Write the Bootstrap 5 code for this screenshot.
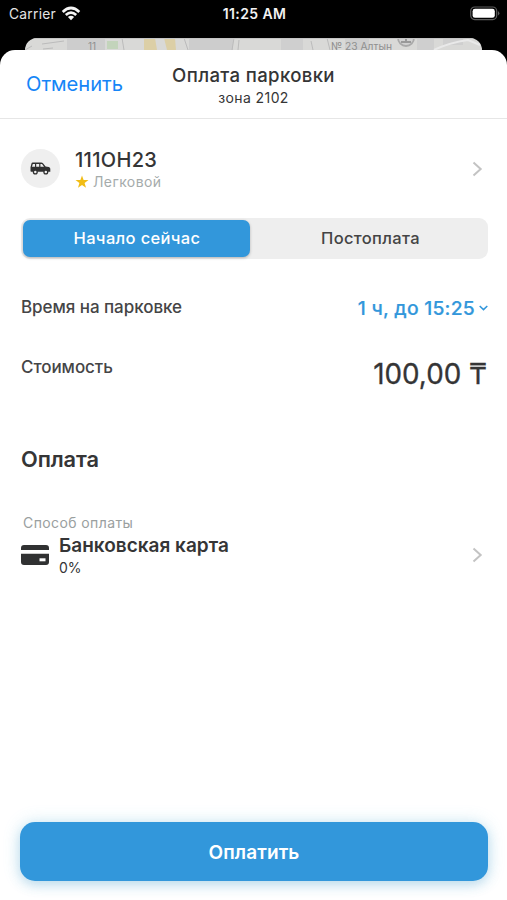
<!DOCTYPE html>
<html lang="ru">
<head>
<meta charset="utf-8">
<meta name="viewport" content="width=device-width, initial-scale=1">
<title>Оплата парковки</title>
<link href="https://cdn.jsdelivr.net/npm/bootstrap@5.3.0/dist/css/bootstrap.min.css" rel="stylesheet">
<style>
body{font-family:Inter,"Liberation Sans",sans-serif;color:#353536;height:900px;overflow:hidden;background:#000}
svg{display:block;flex:none}
.status-bar{height:38px;font-size:13.8px;letter-spacing:.25px;color:#e4e4e4;padding:5px 7px 0 9px}
.status-bar>div{height:18px}
.status-bar .wifi{margin-left:5px;margin-top:-1px}
.status-bar .clock{height:17px;font-size:14px;font-weight:600;letter-spacing:.4px;color:#f2f2f2}
.map-strip{height:12px;margin:0 25px;border-radius:12px 12px 0 0;overflow:hidden}
.map-strip text{font-size:10px;line-height:10px}
.sheet{height:850px;border-radius:15px 15px 0 0}
.sheet-head{height:69px;border-bottom:1px solid #e6e6e6}
.side{width:148px;padding-left:26px}
.cancel{font-size:20.2px;color:#1585f7;letter-spacing:-.05px}
.title{font-size:18.6px;line-height:24px;font-weight:500;letter-spacing:.35px;padding-top:1px}
.zone{font-size:14px;line-height:18px;letter-spacing:.4px;padding-top:2px}
.inset{padding-left:21px;padding-right:19px}
.car-row{height:99px}
.avatar{width:39px;height:39px;background:#efefef;margin-right:15px}
.car-text{padding-top:2px}
.plate{font-size:20px;line-height:24px;font-weight:500;letter-spacing:.3px}
.kind{font-size:14px;line-height:20px;letter-spacing:.4px;color:#a5abab}
.seg{height:41px;background:#eee;border-radius:9px;padding:2px}
.seg .btn{font-size:16.5px;font-weight:500;border:0;padding:0;border-radius:7px;letter-spacing:.35px;color:#444}
.seg .on{flex:0 0 227px;background:#3297db;color:#fff;box-shadow:0 1px 3px rgba(0,0,0,.25);padding-left:1px}
.seg .off{padding-left:5px}
.time-row{height:60px;margin-top:19px}
.lbl{font-size:17px;font-weight:500;letter-spacing:-.05px;color:#454546}
.time{font-size:19.3px;font-weight:500;color:#3297db;gap:4px;letter-spacing:.25px;-webkit-text-stroke:.2px}
.sum-row{height:60px}
.sum{font-size:27.8px;line-height:34px;font-weight:400;padding:19px 1px 0 0;-webkit-text-stroke:.3px}
.pay-title{font-size:21.8px;line-height:30px;font-weight:600;letter-spacing:-.1px;margin-top:46px}
.method-label{font-size:14px;line-height:20px;letter-spacing:.4px;color:#9aa0a0;margin-top:39px;padding-left:2px}
.method{height:44px}
.method-text{padding-top:2px}
.bank{font-size:19px;line-height:24px;font-weight:600}
.fee{font-size:14px;line-height:20px}
.pay{height:59px;margin:0 19px 19px 20px;padding:3px 0 0;border-radius:15px;background:#3297db;font-size:19px;font-weight:600;letter-spacing:.1px;box-shadow:0 4px 12px rgba(50,140,195,.25),0 0 18px rgba(70,180,215,.2)}
</style>
<script src="https://cdn.jsdelivr.net/npm/bootstrap@5.3.0/dist/js/bootstrap.bundle.min.js"></script>
</head>
<body>
<header class="status-bar d-flex">
  <div class="col d-flex align-items-center"><span>Carrier</span>
    <svg class="wifi" width="20" height="15" viewBox="0 0 20 15" fill="none" stroke="#f4f4f4" stroke-width="2.7"><path d="M1.7 5.9Q10-1.9 18.3 5.9M4.8 9Q10 4.2 15.2 9"/><path d="M10 14.3L6.9 11Q10 8.3 13.1 11Z" fill="#f4f4f4" stroke="none"/></svg>
  </div>
  <div class="clock d-flex align-items-center">11:25 AM</div>
  <div class="col d-flex justify-content-end align-items-center">
    <svg width="30" height="16" viewBox="0 0 30 16"><rect x=".7" y="1" width="26" height="12.6" rx="4" fill="none" stroke="#5c5c5c" stroke-width="1.2"/><rect x="2.6" y="2.8" width="22.2" height="9" rx="2.4" fill="#fff"/><path d="M28 5Q30.8 7.3 28 9.6Z" fill="#5c5c5c"/></svg>
  </div>
</header>
<div class="map-strip">
  <svg width="457" height="12" viewBox="0 0 457 12"><path fill="#d9d9d7" d="M0 0h457v12H0z"/><path fill="#cdcdcd" d="M42 0h38v12H42zM164 0h44v12h-44z"/><path fill="#cfcfcf" d="M256 0h22v12h-22zM320 1h24v11h-24zM392 0h17v12h-17zM418 0h20v7h-20z"/><path fill="#dccfa6" d="M119 0h11l2 12h-13zM139 0h11l1 12h-9z"/><path fill="#c3d4bb" d="M82 3h11v8H82z"/><path d="M0 12L7 8M17 6L39 3M18 11L28 10M97 0L99 12M159 0L163 12M209 0L207 12M214 2L213 12M286 3L288 12M302 0L305 12" fill="none" stroke="#bbb"/><path d="M409 12Q423 5 443 2L455 7" fill="none" stroke="#e9e9e9" stroke-width="2"/><circle cx="381" cy="0" r="8" fill="#d1d1d1" stroke="#a9a9a9" stroke-width="1.8"/><path d="M376 4h10M381 0v4" stroke="#999" stroke-width="2"/><path d="M0 .5H457" stroke="#c4c4c4"/><g fill="#8f8f8f" font-family="Inter,sans-serif"><text x="63" y="11.5">11</text><text x="306" y="11.5" textLength="61" lengthAdjust="spacingAndGlyphs">№ 23 Алтын</text></g></svg>
</div>
<main class="sheet bg-white d-flex flex-column">
  <div class="sheet-head d-flex align-items-center">
    <div class="side cancel">Отменить</div>
    <div class="flex-fill text-center"><div class="title">Оплата парковки</div><div class="zone">зона 2102</div></div>
    <div class="side"></div>
  </div>
  <section class="inset">
    <div class="car-row d-flex align-items-center">
      <div class="avatar rounded-circle d-flex align-items-center justify-content-center">
        <svg width="21" height="13" viewBox="0 0 21 13"><path fill="#303030" fill-rule="evenodd" d="M2.8.5H11.2Q12.5.5 13.2 1.4L15.6 4.4L18.8 4.9Q20.3 5.2 20.3 6.8V9.8H1.2Q.5 9.8.5 9V5.3L1.4 1.7Q1.7.5 2.8.5ZM2.8 1.9L2 4.7H5V1.9ZM6.2 1.9V4.7H9.2V1.9ZM10.4 1.9V4.7H14L12 1.9Z"/><circle cx="5.3" cy="9.9" r="1.9" fill="#efefef" stroke="#303030" stroke-width="1.3"/><circle cx="15.8" cy="9.9" r="1.9" fill="#efefef" stroke="#303030" stroke-width="1.3"/></svg>
      </div>
      <div class="car-text flex-fill"><div class="plate">111ОН23</div>
        <div class="kind d-flex align-items-center gap-1"><svg width="14" height="14" viewBox="0 0 14 14"><path fill="#f1bd17" d="M7 .5L8.6 5.1H13.5L9.6 8L11 12.7L7 9.9L3 12.7L4.4 8L.5 5.1H5.4Z"/></svg><span>Легковой</span></div></div>
      <svg width="16" height="16" viewBox="0 0 16 16"><path d="M1.5 1.5L8.7 8L1.5 14.5" fill="none" stroke="#c3c3c3" stroke-width="2"/></svg>
    </div>
    <div class="seg d-flex" role="group"><button class="btn on">Начало сейчас</button><button class="btn off flex-fill">Постоплата</button></div>
    <div class="time-row d-flex justify-content-between align-items-center"><span class="lbl">Время на парковке</span>
      <span class="time d-flex align-items-center"><span>1 ч, до 15:25</span><svg width="9" height="6" viewBox="0 0 9 6"><path d="M.7 1L4.5 4.6L8.3 1" fill="none" stroke="#3297db" stroke-width="1.5"/></svg></span></div>
    <div class="sum-row d-flex justify-content-between"><span class="lbl d-flex align-items-center">Стоимость</span><span class="sum">100,00 ₸</span></div>
    <h2 class="pay-title mb-0">Оплата</h2>
    <div class="method-label">Способ оплаты</div>
    <div class="method d-flex align-items-center">
      <svg width="38" height="22" viewBox="0 0 38 22"><path fill="#303132" d="M3 1H25Q28 1 28 4V6H0V4Q0 1 3 1ZM0 9.8H28V18Q28 21 25 21H3Q0 21 0 18Z"/><rect x="18.5" y="14.3" width="6" height="3" fill="#fff"/></svg>
      <div class="method-text flex-fill"><div class="bank">Банковская карта</div><div class="fee">0%</div></div>
      <svg width="16" height="16" viewBox="0 0 16 16"><path d="M1.5 1.5L8.7 8L1.5 14.5" fill="none" stroke="#c3c3c3" stroke-width="2"/></svg>
    </div>
  </section>
  <button class="pay btn btn-primary border-0 mt-auto">Оплатить</button>
</main>
</body>
</html>
